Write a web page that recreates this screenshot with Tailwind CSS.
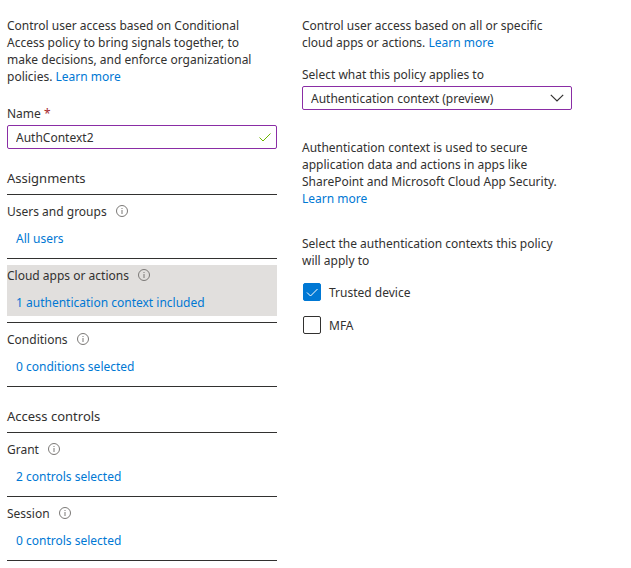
<!DOCTYPE html>
<html lang="en">
<head>
  <meta charset="UTF-8" />
  <meta name="viewport" content="width=device-width, initial-scale=1.0" />
  <title>Conditional Access policy</title>
  <script src="https://cdn.jsdelivr.net/npm/@tailwindcss/browser@4"></script>
</head>
<body class="bg-white text-[#323130] font-['Noto_Sans',sans-serif] text-[12px] leading-[17px]">
  <svg class="hidden">
    <symbol id="info" viewBox="0 0 12 12">
      <circle cx="6" cy="6" r="5.5" fill="none" stroke="currentColor" />
      <path d="M5.5 3h1v1h-1zM5.5 5h1v4h-1z" fill="currentColor" />
    </symbol>
  </svg>

  <main class="grid grid-cols-2 gap-[25px] pt-[17px] pl-[7px] pr-[59px]">
    <!-- Policy -->
    <div>
      <p class="pr-3">Control user access based on Conditional Access policy to bring signals together, to make decisions, and enforce organizational policies. <a href="#" class="text-[#0078d4]">Learn more</a></p>

      <label for="name" class="block mt-5 mb-[3px]">Name <span class="text-[#a4262c]">*</span></label>
      <div class="relative">
        <input type="text" id="name" value="AuthContext2" required class="block w-full h-6 pl-2 pr-8 border border-[#8a2da5] rounded-xs bg-white outline-none" />
        <svg class="absolute right-[6px] top-[7px] w-3 h-[10px] text-[#6bb700]" viewBox="0 0 12 10" fill="none" stroke="currentColor"><path d="M.5 5.5 4 9 11.5 1.5" /></svg>
      </div>

      <h2 class="mt-[21px] pb-[7px] border-b border-[#323130] text-[13px]">Assignments</h2>
      <section class="py-[6px] border-b border-[#323130]">
        <div class="pb-[5px]">
          <h3 class="flex items-center gap-[9px] h-5">Users and groups <svg class="w-3 h-3 text-[#7a7876]"><use href="#info" /></svg></h3>
          <a href="#" class="block mt-[9px] pl-[9px] text-[#0078d4]">All users</a>
        </div>
      </section>
      <section class="py-[6px] border-b border-[#323130]">
        <div class="pb-[5px] bg-[#e1dfdd]">
          <h3 class="flex items-center gap-[9px] h-5">Cloud apps or actions <svg class="w-3 h-3 text-[#7a7876]"><use href="#info" /></svg></h3>
          <a href="#" class="block mt-[9px] pl-[9px] text-[#0078d4]">1 authentication context included</a>
        </div>
      </section>
      <section class="py-[6px] border-b border-[#323130]">
        <div class="pb-[5px]">
          <h3 class="flex items-center gap-[9px] h-5">Conditions <svg class="w-3 h-3 text-[#7a7876]"><use href="#info" /></svg></h3>
          <a href="#" class="block mt-[9px] pl-[9px] text-[#0078d4]">0 conditions selected</a>
        </div>
      </section>

      <h2 class="mt-[21px] pb-[7px] border-b border-[#323130] text-[13px]">Access controls</h2>
      <section class="py-[6px] border-b border-[#323130]">
        <div class="pb-[5px]">
          <h3 class="flex items-center gap-[9px] h-5">Grant <svg class="w-3 h-3 text-[#7a7876]"><use href="#info" /></svg></h3>
          <a href="#" class="block mt-[9px] pl-[9px] text-[#0078d4]">2 controls selected</a>
        </div>
      </section>
      <section class="py-[6px] border-b border-[#323130]">
        <div class="pb-[5px]">
          <h3 class="flex items-center gap-[9px] h-5">Session <svg class="w-3 h-3 text-[#7a7876]"><use href="#info" /></svg></h3>
          <a href="#" class="block mt-[9px] pl-[9px] text-[#0078d4]">0 controls selected</a>
        </div>
      </section>
    </div>

    <!-- Cloud apps or actions -->
    <div>
      <p>Control user access based on all or specific cloud apps or actions. <a href="#" class="text-[#0078d4]">Learn more</a></p>

      <label for="target" class="block mt-[15px] mb-[3px]">Select what this policy applies to</label>
      <div class="relative">
        <select id="target" class="block w-full h-6 pl-2 pr-8 border border-[#8a2da5] rounded-xs bg-white appearance-none outline-none">
          <option>Authentication context (preview)</option>
          <option>Cloud apps</option>
          <option>User actions</option>
        </select>
        <svg class="absolute right-2 top-2 w-[14px] h-2 pointer-events-none" viewBox="0 0 14 8" fill="none" stroke="currentColor" stroke-width="1.2"><path d="M.8.8 7 7 13.2.8" /></svg>
      </div>

      <p class="mt-[29px]">Authentication context is used to secure application data and actions in apps like SharePoint and Microsoft Cloud App Security. <a href="#" class="text-[#0078d4]">Learn more</a></p>

      <fieldset class="mt-7">
        <legend class="mb-[14px]">Select the authentication contexts this policy will apply to</legend>
        <div class="flex flex-col gap-[15px] pl-px">
          <label class="flex items-center gap-2">
            <span class="grid">
              <input type="checkbox" checked class="peer col-start-1 row-start-1 size-[18px] appearance-none rounded-xs border border-[#323130] checked:border-[#0078d4] checked:bg-[#0078d4]" />
              <svg class="col-start-1 row-start-1 size-[18px] invisible peer-checked:visible pointer-events-none text-white" viewBox="0 0 18 18" fill="none" stroke="currentColor"><path d="M4 9.5 7.5 13 14.5 6" /></svg>
            </span>
            Trusted device
          </label>
          <label class="flex items-center gap-2">
            <span class="grid">
              <input type="checkbox" class="peer col-start-1 row-start-1 size-[18px] appearance-none rounded-xs border border-[#323130] checked:border-[#0078d4] checked:bg-[#0078d4]" />
              <svg class="col-start-1 row-start-1 size-[18px] invisible peer-checked:visible pointer-events-none text-white" viewBox="0 0 18 18" fill="none" stroke="currentColor"><path d="M4 9.5 7.5 13 14.5 6" /></svg>
            </span>
            MFA
          </label>
        </div>
      </fieldset>
    </div>
  </main>
</body>
</html>
